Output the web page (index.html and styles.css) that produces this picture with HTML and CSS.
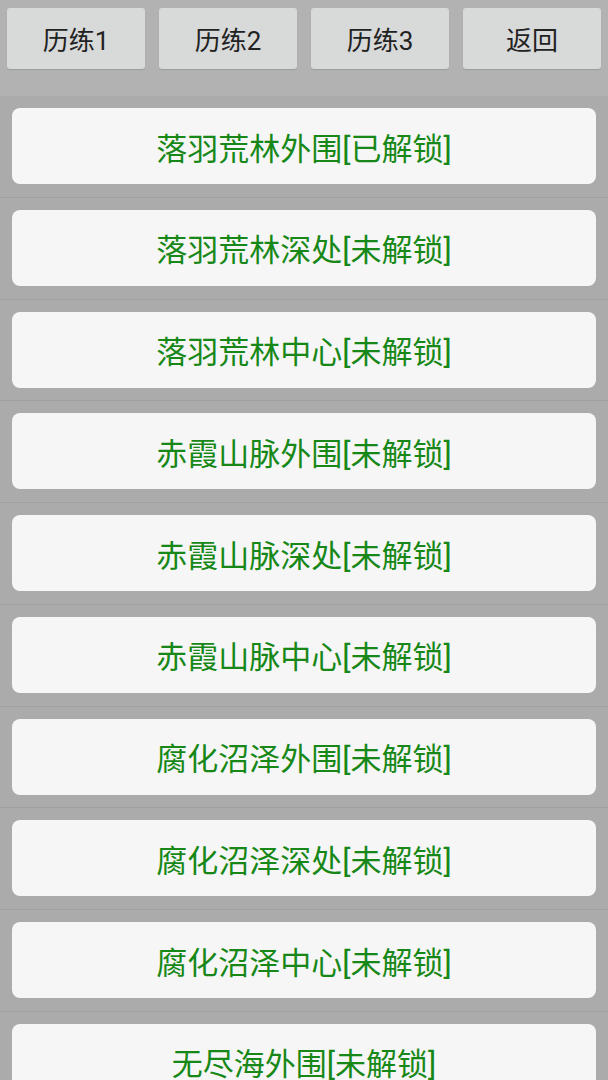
FILE: index.html
```html
<!DOCTYPE html>
<html lang="zh-CN">
<head>
<meta charset="utf-8">
<link rel="stylesheet" href="styles.css">
</head>
<body>
<div class="header">
  <div class="tab">历练1</div>
  <div class="tab">历练2</div>
  <div class="tab">历练3</div>
  <div class="tab">返回</div>
</div>
<div class="list">
  <div class="row"><div class="card">落羽荒林外围[已解锁]</div></div>
  <div class="row"><div class="card">落羽荒林深处[未解锁]</div></div>
  <div class="row"><div class="card">落羽荒林中心[未解锁]</div></div>
  <div class="row"><div class="card">赤霞山脉外围[未解锁]</div></div>
  <div class="row"><div class="card">赤霞山脉深处[未解锁]</div></div>
  <div class="row"><div class="card">赤霞山脉中心[未解锁]</div></div>
  <div class="row"><div class="card">腐化沼泽外围[未解锁]</div></div>
  <div class="row"><div class="card">腐化沼泽深处[未解锁]</div></div>
  <div class="row"><div class="card">腐化沼泽中心[未解锁]</div></div>
  <div class="row"><div class="card">无尽海外围[未解锁]</div></div>
</div>
</body>
</html>
```
FILE: styles.css
```css
html, body {
  margin: 0;
  padding: 0;
  height: 100%;
  overflow: hidden;
  background: #ababab;
  font-family: Roboto, "Noto Sans CJK SC", sans-serif;
}
.header {
  height: 96px;
  box-sizing: border-box;
  padding: 8px 7px 0 7px;
  background: #b2b2b2;
  display: grid;
  grid-template-columns: repeat(4, 138px);
  column-gap: 14px;
  align-items: start;
}
.tab {
  height: 61px;
  background: #d8d9d9;
  border-radius: 3px;
  box-shadow: 0 1px 1px rgba(0,0,0,0.12);
  display: flex;
  align-items: center;
  justify-content: center;
  font-size: 26px;
  color: #222222;
}
.list {
  display: flex;
  flex-direction: column;
}
.row {
  padding: 12px 12px 12.75px 12px;
  border-bottom: 1px solid #a0a0a0;
}
.card {
  height: 76px;
  background: #f6f6f6;
  border-radius: 8px;
  display: flex;
  align-items: center;
  justify-content: center;
  font-size: 31px;
  color: #178817;
}
```
